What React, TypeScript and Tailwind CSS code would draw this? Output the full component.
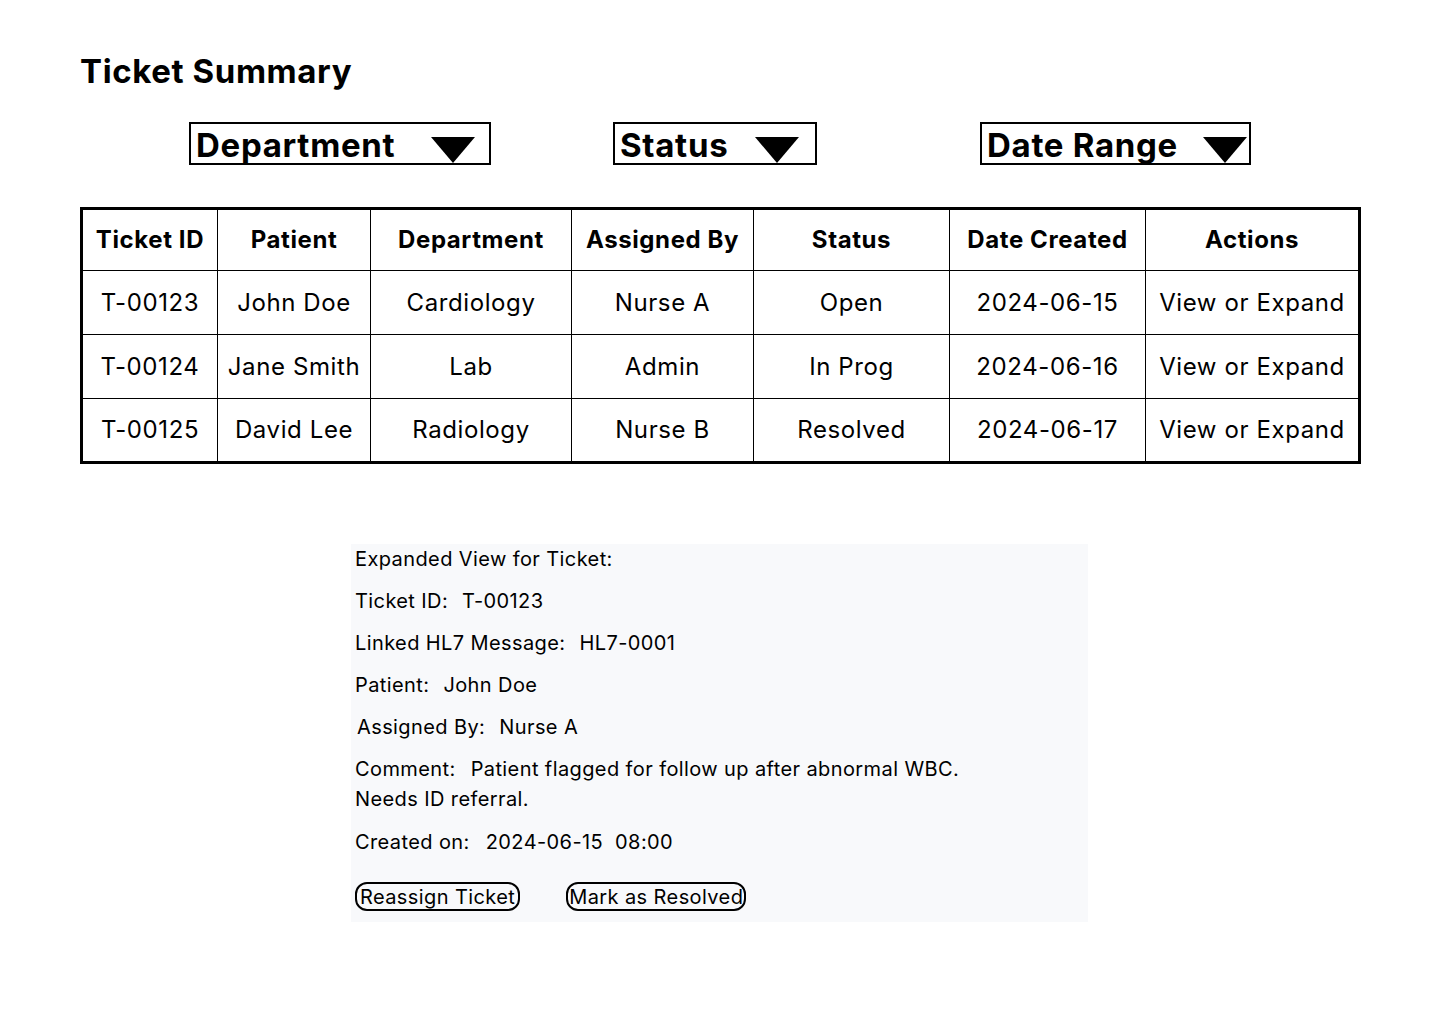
import React from 'react';

const font = { fontFamily: 'Inter, "Noto Sans", sans-serif' };

interface Ticket {
  id: string;
  patient: string;
  department: string;
  assignedBy: string;
  status: string;
  created: string;
}

const tickets: Ticket[] = [
  { id: 'T-00123', patient: 'John Doe', department: 'Cardiology', assignedBy: 'Nurse A', status: 'Open', created: '2024-06-15' },
  { id: 'T-00124', patient: 'Jane Smith', department: 'Lab', assignedBy: 'Admin', status: 'In Prog', created: '2024-06-16' },
  { id: 'T-00125', patient: 'David Lee', department: 'Radiology', assignedBy: 'Nurse B', status: 'Resolved', created: '2024-06-17' },
];

const columns = ['Ticket ID', 'Patient', 'Department', 'Assigned By', 'Status', 'Date Created', 'Actions'];
const widths = ['w-[136px]', 'w-[153px]', 'w-[201px]', 'w-[182px]', 'w-[196px]', 'w-[196px]', 'w-[214px]'];

const Caret = () => (
  <svg width="44" height="26" viewBox="0 0 44 26" className="shrink-0">
    <polygon points="0,0 44,0 22,26" fill="#000" />
  </svg>
);

const Dropdown: React.FC<{ label: string; className: string }> = ({ label, className }) => (
  <div className={`h-[43px] border-2 border-black flex items-end justify-between pl-[5px] ${className}`}>
    <span className="text-[33px] font-bold leading-none pb-[1px] tracking-[0.7px]">{label}</span>
    <Caret />
  </div>
);

const Line: React.FC<{ label: string; value?: string; className?: string }> = ({ label, value, className = '' }) => (
  <div className={`h-[30px] flex items-center ${className}`}>
    <span>{label}</span>
    {value && <span className="ml-[14px]">{value}</span>}
  </div>
);

const App: React.FC = () => {
  return (
    <div className="w-[1440px] h-[1024px] bg-white text-black" style={font}>
      <div className="pt-[51px] pl-[80px]">
        <h1 className="text-[33px] font-bold leading-[40px] tracking-[0.6px]">Ticket Summary</h1>

        <div className="flex mt-[31px]">
          <Dropdown label="Department" className="ml-[109px] w-[302px] pr-[14px]" />
          <Dropdown label="Status" className="ml-[122px] w-[204px] pr-[16px]" />
          <Dropdown label="Date Range" className="ml-[163px] w-[271px] pr-[2px]" />
        </div>

        <table className="mt-[42px] w-[1278px] border-collapse border-[3px] border-black table-fixed">
          <thead>
            <tr className="h-[62px]">
              {columns.map((c, i) => (
                <th key={c} className={`${widths[i]} border border-black text-[24px] font-bold text-center tracking-[0.6px]`}>
                  {c}
                </th>
              ))}
            </tr>
          </thead>
          <tbody>
            {tickets.map((t) => (
              <tr key={t.id} className="h-[64px] text-[24px] tracking-[0.6px]">
                <td className="border border-black text-center">{t.id}</td>
                <td className="border border-black text-center">{t.patient}</td>
                <td className="border border-black text-center">{t.department}</td>
                <td className="border border-black text-center">{t.assignedBy}</td>
                <td className="border border-black text-center">{t.status}</td>
                <td className="border border-black text-center">{t.created}</td>
                <td className="border border-black text-center">View or Expand</td>
              </tr>
            ))}
          </tbody>
        </table>
      </div>

      <div className="ml-[351px] mt-[80px] w-[737px] h-[378px] bg-[#f8f9fb] pl-[4px] text-[20px] tracking-[0.4px]">
        <div className="flex flex-col gap-[12px]">
          <Line label="Expanded View for Ticket:" />
          <Line label="Ticket ID:" value="T-00123" />
          <Line label="Linked HL7 Message:" value="HL7-0001" />
          <Line label="Patient:" value="John Doe" />
          <Line label="Assigned By:" value="Nurse A" className="pl-[2px]" />
          <div className="leading-[30px]">
            <div>
              Comment:<span className="ml-[15px]">Patient flagged for follow up after abnormal WBC.</span>
            </div>
            <div>Needs ID referral.</div>
          </div>
        </div>
        <div className="mt-[13px] h-[30px] flex items-center">
          <span>Created on:</span>
          <span className="ml-[16px]">2024-06-15</span>
          <span className="ml-[12px]">08:00</span>
        </div>
        <div className="flex mt-[25px] gap-[46px]">
          <button className="h-[29px] px-[3px] border-2 border-black rounded-[12px] leading-none tracking-[0.4px]">Reassign Ticket</button>
          <button className="h-[29px] px-[1px] border-2 border-black rounded-[12px] leading-none tracking-[0.4px]">Mark as Resolved</button>
        </div>
      </div>
    </div>
  );
};

export default App;
